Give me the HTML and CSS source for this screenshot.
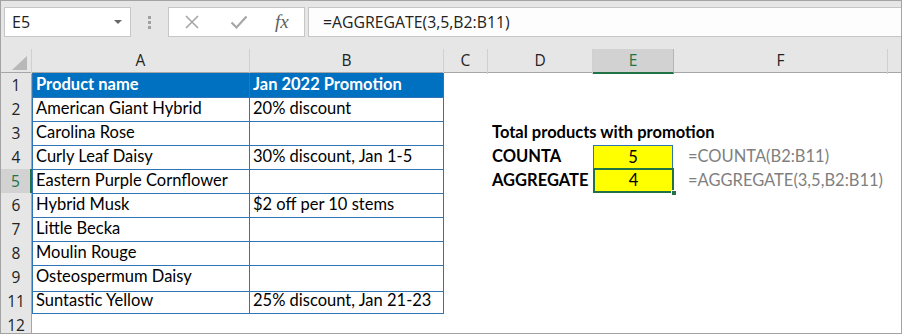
FILE: index.html
```html
<!DOCTYPE html>
<html lang="en">
<head>
    <meta charset="UTF-8">
    <title>AGGREGATE vs COUNTA</title>
    <link rel="stylesheet" href="styles.css">
</head>
<body>
    <div class="window">
        <div class="toolbar">
            <div class="name-box">
                <span>E5</span>
                <span class="caret"></span>
            </div>
            <div class="grip"><i></i><i></i><i></i></div>
            <div class="buttons">
                <svg class="icon" width="16" height="16" viewBox="0 0 16 16">
                    <path d="M2 2 L14 14 M14 2 L2 14" stroke="#a6a6a6" stroke-width="1.6" fill="none"/>
                </svg>
                <svg class="icon" width="18" height="16" viewBox="0 0 18 16">
                    <path d="M1.5 8.5 L6.5 13.5 L16.5 2.5" stroke="#a6a6a6" stroke-width="2.2" fill="none"/>
                </svg>
                <span class="fx">fx</span>
            </div>
            <div class="formula">=AGGREGATE(3,5,B2:B11)</div>
        </div>

        <div class="sheet">
            <div class="row head">
                <div class="corner"><span class="tri"></span></div>
                <div class="ch">A</div>
                <div class="ch">B</div>
                <div class="ch">C</div>
                <div class="ch">D</div>
                <div class="ch active">E</div>
                <div class="ch">F</div>
                <div class="ch rest"></div>
            </div>
            <div class="row">
                <div class="rh">1</div>
                <div class="c t first th">Product name</div>
                <div class="c t th">Jan 2022 Promotion</div>
            </div>
            <div class="row">
                <div class="rh">2</div>
                <div class="c t first">American Giant Hybrid</div>
                <div class="c t">20% discount</div>
            </div>
            <div class="row">
                <div class="rh">3</div>
                <div class="c t first">Carolina Rose</div>
                <div class="c t"></div>
                <div class="c"></div>
                <div class="c bold">Total products with promotion</div>
            </div>
            <div class="row">
                <div class="rh">4</div>
                <div class="c t first">Curly Leaf Daisy</div>
                <div class="c t">30% discount, Jan 1-5</div>
                <div class="c"></div>
                <div class="c bold">COUNTA</div>
                <div class="c value">5</div>
                <div class="c note">=COUNTA(B2:B11)</div>
            </div>
            <div class="row">
                <div class="rh active">5</div>
                <div class="c t first">Eastern Purple Cornflower</div>
                <div class="c t"></div>
                <div class="c"></div>
                <div class="c bold">AGGREGATE</div>
                <div class="c value selected">4<span class="handle"></span></div>
                <div class="c note">=AGGREGATE(3,5,B2:B11)</div>
            </div>
            <div class="row">
                <div class="rh">6</div>
                <div class="c t first">Hybrid Musk</div>
                <div class="c t">$2 off per 10 stems</div>
            </div>
            <div class="row">
                <div class="rh">7</div>
                <div class="c t first">Little Becka</div>
                <div class="c t"></div>
            </div>
            <div class="row">
                <div class="rh">8</div>
                <div class="c t first">Moulin Rouge</div>
                <div class="c t"></div>
            </div>
            <div class="row">
                <div class="rh hidden-next">9</div>
                <div class="c t first">Osteospermum Daisy</div>
                <div class="c t"></div>
            </div>
            <div class="row">
                <div class="rh">11</div>
                <div class="c t first">Suntastic Yellow</div>
                <div class="c t">25% discount, Jan 21-23</div>
            </div>
            <div class="row">
                <div class="rh">12</div>
            </div>
        </div>
    </div>
</body>
</html>
```
FILE: styles.css
```css
* {
    box-sizing: border-box;
}
body {
    margin: 0;
    background: #fff;
    font-family: "Open Sans", "Noto Sans", sans-serif;
}
.window {
    width: 902px;
    height: 334px;
    border: 1px solid #a3a3a3;
    background: #e6e6e6;
    overflow: hidden;
}

/* formula bar */
.toolbar {
    height: 48px;
    display: flex;
    align-items: flex-start;
    padding-top: 6px;
    padding-left: 3px;
}
.name-box {
    width: 127px;
    height: 30px;
    background: #fff;
    border: 1px solid #c6c6c6;
    display: flex;
    align-items: center;
    justify-content: space-between;
    padding: 0 8px 0 7px;
    font-size: 16px;
    color: #222;
}
.caret {
    width: 0;
    height: 0;
    border-left: 4px solid transparent;
    border-right: 4px solid transparent;
    border-top: 4px solid #666;
}
.grip {
    width: 37px;
    height: 30px;
    display: flex;
    flex-direction: column;
    align-items: center;
    justify-content: center;
    gap: 2px;
}
.grip i {
    width: 3px;
    height: 3px;
    background: #a0a0a0;
}
.buttons {
    width: 137px;
    height: 30px;
    background: #fff;
    border: 1px solid #c6c6c6;
    display: flex;
    align-items: center;
    padding-left: 15px;
    gap: 30px;
}
.fx {
    font-family: "Liberation Serif", serif;
    font-style: italic;
    font-size: 19px;
    color: #5e5e5e;
    margin-left: -3px;
}
.formula {
    flex: 1;
    height: 30px;
    margin-left: 3px;
    background: #fdfdfd;
    border: 1px solid #c6c6c6;
    border-right: none;
    padding-left: 14px;
    line-height: 28px;
    font-size: 15.8px;
    color: #222;
}

/* grid */
.sheet {
    background: #fff;
    height: 284px;
    overflow: hidden;
}
.row {
    display: grid;
    grid-template-columns: 31px 218px 194px 44px 105px 81px 214px 1fr;
    height: 24px;
    font-family: "Lato", sans-serif;
    font-size: 16.5px;
}
.row.head {
    background: #e6e6e6;
    border-bottom: 1px solid #a6a6a6;
    font-family: "Open Sans", sans-serif;
    font-size: 15.5px;
    color: #222;
}
.corner {
    position: relative;
    border-right: 1px solid #d0d0d0;
}
.tri {
    position: absolute;
    right: 4px;
    bottom: 4px;
    width: 0;
    height: 0;
    border-left: 15px solid transparent;
    border-bottom: 14px solid #b8b8b8;
}
.ch {
    text-align: center;
    line-height: 23px;
    border-right: 1px solid #d0d0d0;
}
.ch.active {
    background: #d2d2d2;
    color: #217346;
    border-bottom: 2px solid #217346;
    border-right-color: #b5b5b5;
}
.ch.rest {
    border-right: none;
}
.rh {
    background: #e6e6e6;
    border-right: 1px solid #a6a6a6;
    border-bottom: 1px solid #d4d4d4;
    text-align: center;
    line-height: 24px;
    color: #222;
    font-family: "Open Sans", sans-serif;
    font-size: 15.5px;
}
.rh.active {
    background: #d2d2d2;
    color: #217346;
    border-right: 2px solid #217346;
}
.rh.hidden-next {
    border-bottom: 3px double #b0b0b0;
}
.c {
    padding-left: 3px;
    line-height: 23px;
    white-space: nowrap;
    color: #000;
}
.c.t {
    border-right: 1px solid #2f75b5;
    border-bottom: 1px solid #2f75b5;
}
.c.first {
    border-left: 1px solid #2f75b5;
}
.c.th {
    background: #0070c0;
    color: #fff;
    font-weight: bold;
}
.bold {
    font-weight: bold;
    padding-left: 4px;
}
.value {
    background: #ffff00;
    text-align: center;
    border: 1px solid #2f75b5;
    padding-left: 0;
    line-height: 22px;
    margin-right: 1px;
}
.value.selected {
    position: relative;
    border: 2px solid #217346;
    line-height: 20px;
    margin-right: 0;
    margin-top: -1px;
    height: 25px;
}
.handle {
    position: absolute;
    right: -5px;
    bottom: -5px;
    width: 6px;
    height: 6px;
    background: #217346;
    border: 1px solid #fff;
}
.note {
    color: #7f7f7f;
    padding-left: 14px;
}
```
